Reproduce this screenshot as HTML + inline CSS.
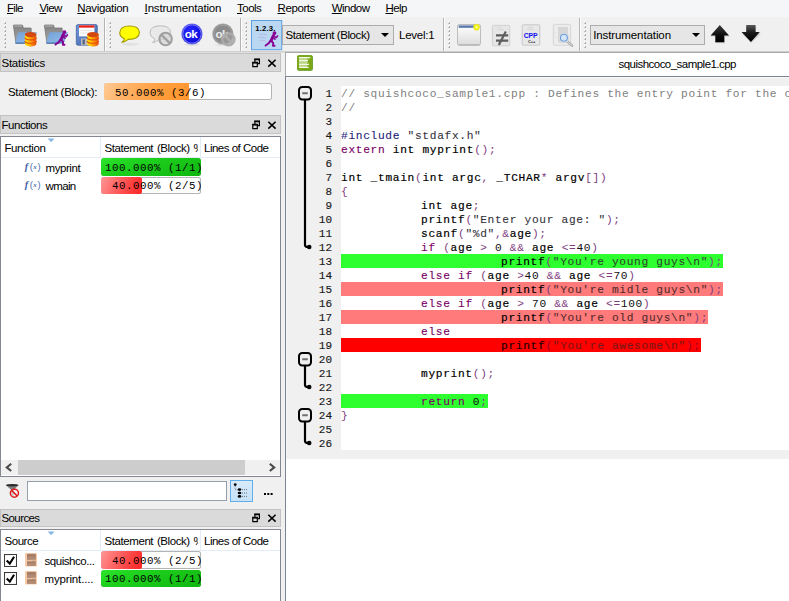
<!DOCTYPE html>
<html><head><meta charset="utf-8"><title>CoverageBrowser</title>
<style>
html,body{margin:0;padding:0}
body{width:789px;height:601px;overflow:hidden;background:#f0f0f0;position:relative;font-family:"Liberation Sans",sans-serif;font-size:11.5px;color:#000;letter-spacing:-0.25px}
div,span,svg{position:absolute;box-sizing:border-box}
span{position:static}
.abs{position:absolute}
/* menubar */
#menubar{left:0;top:0;width:789px;height:17px;background:#f5f6f7}
#menubar span{position:absolute;top:1px;line-height:14px;white-space:nowrap}
u{text-decoration:underline;text-underline-offset:1px}
/* toolbar */
#toolbar{left:0;top:17px;width:789px;height:34px;background:#f0f0f0}
#tbline{left:0;top:51px;width:789px;height:1px;background:#cdcdcd}#tbline3{left:0;top:52px;width:285px;height:1px;background:#e0e0e0}
#tbline2{left:285px;top:52px;width:504px;height:1px;background:#a9a9a9}
.sep{top:18px;width:1px;height:33px;background:#b4b4b4}
.sep:after{content:"";position:absolute;left:1px;top:0;width:1px;height:33px;background:#fff}
.grip{top:22px;width:3px;height:27px}
.combo{background:#e6e6e6;border:1px solid #adadad;height:20px;line-height:19px;white-space:nowrap}
.arrow{width:0;height:0;border-left:4px solid transparent;border-right:4px solid transparent;border-top:4px solid #000}
/* dock headers */
.dock{left:0;width:281px;height:18.4px;background:#dadada;border:1px solid #c3c3c3;line-height:18px;padding-left:0.5px;white-space:nowrap}
.tree{left:0;width:281px;background:#fff;border:1px solid #828790}
.th{top:0;height:21px;line-height:23px;border-bottom:1px solid #e4ecf7;white-space:nowrap}
.thsep{top:0;width:1px;height:21px;background:#e4ecf7}
.bar{height:17px;border-radius:2.5px;overflow:hidden;background:#fff;box-shadow:inset 0 0 0 1px #b4b4b4}
.bar i{position:absolute;left:0;top:0;bottom:0;border-radius:2.5px}
.bar b{position:absolute;left:4px;top:2px;font:normal 10.8px/15.6px "Liberation Mono",monospace;letter-spacing:0.52px;white-space:pre;color:#000}
.green i{width:100%;background:linear-gradient(160deg,#2ee62e 0,#20d420 25%,#18c618 60%,#0fb60f 100%)}
.red i{width:40.9px;background:linear-gradient(115deg,#ff9898 0,#ff7070 30%,#ff4040 70%,#ff2626 100%)}
.row{white-space:nowrap;line-height:18px;height:18px}
/* editor */
#edpanel{left:286px;top:53px;width:503px;height:548px;background:#fff}
#edborder{left:285px;top:76px;width:1px;height:525px;background:#7c8492}#edborder2{left:285px;top:53px;width:1px;height:23px;background:#adadad}
#tabline{left:286px;top:76px;width:503px;height:1px;background:#7c8492}
#edgray{left:286px;top:77px;width:503px;height:382px;background:#f0f0f0;border-left:1px solid #f7f7f7;border-top:1px solid #f9f9f9}
#edwhite{left:340.5px;top:86px;width:449px;height:364px;background:#fff}
.ln{left:300px;width:32px;height:14px;text-align:right;font:normal 11px/14px "Liberation Mono",monospace;-webkit-text-stroke:0.15px #1a1a22;letter-spacing:0;color:#1a1a22;padding-top:1.3px;overflow:visible}
.cl{left:341px;height:14px;padding-top:0;width:449px;overflow:hidden;white-space:pre;tab-size:80px;-moz-tab-size:80px;font:11.2px/17px "Liberation Mono",monospace;letter-spacing:0.68px;color:#000}
.cl span{position:static}
.hl{display:inline-block;height:14px;line-height:17px;overflow:hidden;margin-left:0;vertical-align:top}
.hg{background:#2eff2e}.hs{background:#ff7a7a}.hr{background:#ff0000}
.c{color:#808080}.p{color:#241c78;-webkit-text-stroke:.1px #241c78}.s{color:#34343c;-webkit-text-stroke:.1px #34343c}.k{color:#7a0066;-webkit-text-stroke:.12px #7a0066}.i{color:#000;-webkit-text-stroke:0.18px #000}.o{color:#803c80}.n{color:#101010}
.hr .s{color:#8c1010}.hr .o{color:#a00030}.hr .i{color:#300000}
.hs .s{color:#5a2a2a}.hg .s{color:#2a4a2a}
</style></head><body>
<div id="menubar">
<span style="left:7px;letter-spacing:-0.7px"><u>F</u>ile</span>
<span style="left:39.5px;letter-spacing:-0.65px"><u>V</u>iew</span>
<span style="left:77.3px;letter-spacing:-0.33px"><u>N</u>avigation</span>
<span style="left:144.6px;letter-spacing:-0.17px"><u>I</u>nstrumentation</span>
<span style="left:237px;letter-spacing:-0.5px"><u>T</u>ools</span>
<span style="left:277.5px;letter-spacing:-0.4px"><u>R</u>eports</span>
<span style="left:331.8px;letter-spacing:-0.55px"><u>W</u>indow</span>
<span style="left:385.5px;letter-spacing:-0.6px"><u>H</u>elp</span>
</div>

<div id="toolbar"></div><div id="tbline"></div><div id="tbline2"></div><div id="tbline3"></div>
<div class="sep" style="left:104px"></div><div class="sep" style="left:240px"></div><div class="sep" style="left:443px"></div><div class="sep" style="left:579px"></div>
<svg id="tbsvg" style="left:0;top:17px" width="789" height="35" viewBox="0 17 789 35">
<defs>
<linearGradient id="gFold" x1="0" y1="0" x2="0" y2="1"><stop offset="0" stop-color="#808080"/><stop offset="1" stop-color="#ababab"/></linearGradient>
<linearGradient id="gFront" x1="0" y1="0" x2="1" y2="1"><stop offset="0" stop-color="#6fa0da"/><stop offset=".6" stop-color="#8ab2e2"/><stop offset="1" stop-color="#5a90d4"/></linearGradient>
<linearGradient id="gDb" x1="0" y1="0" x2="1" y2="0"><stop offset="0" stop-color="#ffe400"/><stop offset=".3" stop-color="#ffc400"/><stop offset=".7" stop-color="#fb7c08"/><stop offset="1" stop-color="#e2500e"/></linearGradient>
<linearGradient id="gFlop" x1="0" y1="0" x2="1" y2="1"><stop offset="0" stop-color="#6f96d8"/><stop offset="1" stop-color="#3f62a8"/></linearGradient>
<linearGradient id="gWin" x1="0" y1="0" x2="0" y2="1"><stop offset="0" stop-color="#ffffff"/><stop offset="1" stop-color="#dcdcdc"/></linearGradient>
<radialGradient id="gOk" cx=".4" cy=".35" r=".7"><stop offset="0" stop-color="#2a2aff"/><stop offset="1" stop-color="#0808d8"/></radialGradient>
<radialGradient id="gYel" cx=".5" cy=".5" r=".5"><stop offset="0" stop-color="#ffffd8"/><stop offset=".45" stop-color="#f8f820"/><stop offset="1" stop-color="#eaea00"/></radialGradient>
<linearGradient id="gArU" x1="0" y1="0" x2="0" y2="1"><stop offset="0" stop-color="#3c3c3c"/><stop offset=".6" stop-color="#0c0c0c"/><stop offset="1" stop-color="#000"/></linearGradient><linearGradient id="gArD" x1="0" y1="0" x2="0" y2="1"><stop offset="0" stop-color="#585858"/><stop offset=".45" stop-color="#1a1a1a"/><stop offset="1" stop-color="#000"/></linearGradient>
<g id="grip"><g fill="#fff"><rect x="0" y="-0.6" width="1.6" height="1.6"/><rect x="0" y="3.4" width="1.6" height="1.6"/><rect x="0" y="7.4" width="1.6" height="1.6"/><rect x="0" y="11.4" width="1.6" height="1.6"/><rect x="0" y="15.4" width="1.6" height="1.6"/><rect x="0" y="19.4" width="1.6" height="1.6"/><rect x="0" y="23.4" width="1.6" height="1.6"/></g><g fill="#969696"><path d="M2 -0.2 v2 h-2 z M.9 0.6 h1.1 v1.2 h-1.1z"/><path d="M2 3.8 v2 h-2 z M.9 4.6 h1.1 v1.2 h-1.1z"/><path d="M2 7.8 v2 h-2 z M.9 8.6 h1.1 v1.2 h-1.1z"/><path d="M2 11.8 v2 h-2 z M.9 12.6 h1.1 v1.2 h-1.1z"/><path d="M2 15.8 v2 h-2 z M.9 16.6 h1.1 v1.2 h-1.1z"/><path d="M2 19.8 v2 h-2 z M.9 20.6 h1.1 v1.2 h-1.1z"/><path d="M2 23.8 v2 h-2 z M.9 24.6 h1.1 v1.2 h-1.1z"/></g></g>
<g id="folder"><path d="M.4 1.6 Q.4 1 1 1 h8 Q9.6 1 9.8 1.8 L10.2 4 h7.4 Q18.2 4 18.2 4.6 V9 L15 19.4 h-12 z" fill="url(#gFold)" stroke="#707070" stroke-width=".7"/><path d="M1.2 2 h7.8" stroke="#c8c8c8" stroke-width=".8"/><path d="M5.4 8.2 h18.6 l-4.2 10.8 h-17.6 z" fill="url(#gFront)"/><path d="M2.2 19 h17.6" stroke="#3a72bc" stroke-width="1"/></g>
<g id="db"><path d="M0 2.6 v9.4 a5.7 2.6 0 0 0 11.4 0 v-9.4 z" fill="url(#gDb)"/><path d="M0 5.6 a5.7 2.3 0 0 0 11.4 0 M0 8.9 a5.7 2.3 0 0 0 11.4 0" fill="none" stroke="#e2500a" stroke-width="1.1"/><ellipse cx="5.7" cy="2.6" rx="5.7" ry="2.6" fill="#d24810"/></g>
<g id="runner" fill="none" stroke="#860094" stroke-linecap="round" stroke-linejoin="round"><circle cx="9.9" cy="2.1" r="1.9" fill="#860094" stroke="none"/><path d="M8.8 4.6 L6.4 9.8" stroke-width="2.9"/><path d="M8.8 5 L11.8 6.6 L13 4.8" stroke-width="1.5"/><path d="M8 6.2 L10.4 8.2" stroke-width="1.5"/><path d="M6.6 9.8 L8.6 11.8 L8.4 14.7 L10 14.7" stroke-width="1.9"/><path d="M6 9.6 L3.8 12.6 L1 14.6" stroke-width="1.9"/></g>
<g id="nosign"><circle cx="0" cy="0" r="6.2" fill="#d4d4d4" fill-opacity=".7" stroke="#a0a0a0" stroke-width="2.1"/><path d="M-4.4 -4.4 L4.4 4.4" stroke="#a0a0a0" stroke-width="2.2"/></g>
</defs>
<use href="#grip" x="4" y="22"/><use href="#grip" x="109" y="22"/><use href="#grip" x="245" y="22"/><use href="#grip" x="448" y="22"/><use href="#grip" x="584" y="22"/>
<!-- icon1 -->
<use href="#folder" x="13" y="24"/><use href="#db" x="24.9" y="32"/>
<!-- icon2 -->
<use href="#folder" x="44" y="24"/><use href="#runner" x="54.5" y="30"/>
<!-- icon3 floppy -->
<rect x="76.3" y="24.6" width="21" height="20.6" rx="1.6" fill="url(#gFlop)" stroke="#3a5a9c" stroke-width=".7"/>
<rect x="79" y="25.4" width="15.4" height="11" fill="#fbfbfb"/><rect x="79" y="25.4" width="15.4" height="2.2" fill="#e81c10"/>
<path d="M80.5 30.5h12M80.5 33h12" stroke="#ddd" stroke-width=".7"/>
<rect x="81" y="38.4" width="9" height="6.8" fill="#b8bcc4"/><rect x="82.6" y="39.4" width="2.2" height="5" fill="#55607a"/>
<use href="#db" x="87.2" y="32"/>
<!-- yellow bubble -->
<ellipse cx="130.4" cy="44.2" rx="8.6" ry="1.5" fill="#e1e1e1"/>
<path d="M124.4 38.8 Q119.6 36.6 119.8 32.5 Q120.2 26 129.6 26 Q139.2 26 139.4 32.5 Q139.2 39.4 128.2 39.4 Q125 42 122.2 42.3 Q124 40.6 124.4 38.8z" fill="#ffff00" stroke="#a09800" stroke-width="1.1"/>
<!-- gray bubble + nosign -->
<path d="M155 39.2 Q149.8 36.8 150 32.6 Q150.4 25.8 160.4 25.8 Q170.4 25.8 170.6 32.6 Q170.4 39.8 158.8 39.8 Q155.4 42.4 152.6 42.6 Q154.6 41 155 39.2z" fill="#e9e9e9" stroke="#b4b4b4" stroke-width=".9"/>
<use href="#nosign" x="165.6" y="39"/>
<!-- blue ok -->
<ellipse cx="192" cy="44.6" rx="8" ry="1.4" fill="#e0e0e0"/>
<circle cx="192" cy="34" r="10.6" fill="#7474f4"/><circle cx="192" cy="34" r="10" fill="url(#gOk)"/><circle cx="192" cy="34" r="9.2" fill="none" stroke="#fff" stroke-opacity=".75" stroke-width=".6"/>
<text x="190.9" y="37.8" text-anchor="middle" font-family="Liberation Sans, sans-serif" font-weight="bold" font-size="11.6" fill="#fff" letter-spacing="-.55">ok</text>
<!-- gray ok -->
<ellipse cx="223" cy="44.8" rx="8" ry="1.3" fill="#e2e2e2"/>
<circle cx="222.9" cy="34" r="10.6" fill="#a8a8a8"/><circle cx="222.9" cy="34" r="9.8" fill="#8b8b8b"/><circle cx="222.9" cy="34" r="9" fill="none" stroke="#c4c4c4" stroke-opacity=".6" stroke-width=".6"/>
<text x="221.6" y="37.8" text-anchor="middle" font-family="Liberation Sans, sans-serif" font-weight="bold" font-size="11.6" fill="#ececec" letter-spacing="-.55">ok</text>
<circle cx="228.4" cy="39.4" r="6.2" fill="#9c9c9c" fill-opacity=".72" stroke="#adadad" stroke-width="2"/><path d="M224 35 L232.8 43.8" stroke="#adadad" stroke-width="2.2"/>
<!-- 1.2.3 button -->
<rect x="251.5" y="20.5" width="30.2" height="29.2" fill="#bbd8f3" stroke="#5a9fe2" stroke-width="1"/>
<text x="255.3" y="30.7" font-family="Liberation Sans, sans-serif" font-weight="bold" font-size="7.7" fill="#000" letter-spacing=".15">1.2.3.</text>
<path d="M259 34.5q4 -1 8 .6M258 37.5q4 -1 8 .6M259.5 40.5q3 -1 6 .6" stroke="#b4a8e0" stroke-width=".7" fill="none"/>
<use href="#runner" x="264.6" y="31"/>
<!-- window icon -->
<rect x="457.5" y="24.5" width="23" height="20.5" rx="1.6" fill="url(#gWin)" stroke="#bcbcbc" stroke-width="1"/><path d="M458.5 45h21" stroke="#a8a8a8" stroke-width="1"/>
<rect x="458.6" y="25.4" width="19" height="2.4" fill="#5878ac"/>
<circle cx="476.6" cy="27.2" r="3.1" fill="url(#gYel)" stroke="#e8e05a" stroke-width=".6"/>
<!-- not-equal icon -->
<rect x="492.4" y="25.4" width="17.4" height="20.4" rx="1" fill="#e6e6e6" stroke="#cdcdcd" stroke-width=".9"/>
<path d="M497 27.6h5M497 29.6h7" stroke="#d6d6d6" stroke-width=".9"/>
<path d="M496 35.3h12.2M496 40.7h12.2" stroke="#5e5e5e" stroke-width="2.3"/><path d="M505.8 31.4L498.8 45" stroke="#5e5e5e" stroke-width="2.2"/>
<!-- cpp icon -->
<rect x="522.2" y="24.8" width="17.6" height="20.4" rx="1" fill="#e8e8e8" stroke="#c4c4c4" stroke-width=".9"/>
<path d="M528 27.4h5M527 29.4h7" stroke="#d4d4d4" stroke-width=".9"/>
<text x="530.6" y="37.7" text-anchor="middle" font-family="Liberation Sans, sans-serif" font-weight="bold" font-size="6.9" fill="#1010f0" letter-spacing="-.1">CPP</text>
<text x="531.6" y="42.6" text-anchor="middle" font-family="Liberation Sans, sans-serif" font-weight="bold" font-size="4.2" fill="#333">C++</text>
<!-- magnifier icon -->
<rect x="553.3" y="24.4" width="17.4" height="20.8" rx="1.2" fill="#ececec" stroke="#d3d3d3" stroke-width=".9"/>
<rect x="558" y="27" width="10" height="15.6" fill="#d6d6d6"/>
<path d="M554.6 33h1M554.6 37.6h1" stroke="#d0d0d0" stroke-width=".8"/>
<path d="M566.6 40.6L572 45.6" stroke="#a9a9ad" stroke-width="2.6" stroke-linecap="round"/><path d="M567 41L571.8 45.4" stroke="#ececec" stroke-width=".8" stroke-linecap="round"/>
<circle cx="563.9" cy="37.8" r="4.9" fill="#f2f4f6" stroke="#c9cdd2" stroke-width=".7"/>
<circle cx="563.9" cy="37.8" r="3.5" fill="#d3e4f7" stroke="#6b9bd6" stroke-width="1.1"/>
<!-- up/down arrows -->
<path d="M720.2 26.6L730 36.6h-5v6.6h-9.4v-6.6h-5.4z" fill="#c4c4c4" opacity=".7"/>
<path d="M719.8 25.1L729 35.6h-4.7v6.7h-9v-6.7h-4.7z" fill="url(#gArU)"/>
<path d="M751.4 43L761 33.4h-5V27h-9.4v6.4h-5z" fill="#c4c4c4" opacity=".7"/>
<path d="M750.9 41.9L759.8 32.1h-4.2v-7h-9.4v7h-4.6z" fill="url(#gArD)"/>
</svg>
<div class="combo" style="left:282px;top:25px;width:112px;padding-left:2.4px;letter-spacing:-0.42px">Statement (Block)</div><div class="arrow" style="left:381px;top:33px"></div>
<div style="left:399px;top:27px;line-height:17px;white-space:nowrap">Level:1</div>
<div class="combo" style="left:590px;top:25px;width:115px;padding-left:2.2px;letter-spacing:-0.1px">Instrumentation</div><div class="arrow" style="left:691.5px;top:33px"></div>

<!-- dock title icons -->
<svg width="0" height="0" style="left:0;top:0"><defs>
<g id="dockbtn"><path d="M2.9 1.4h4.5v4.3h-4.5z" fill="none" stroke="#000" stroke-width="1.2"/><path d="M2.3 1.4h5.7" stroke="#000" stroke-width="1.7"/><path d="M.8 4.6h4.5v4.1h-4.5z" fill="#dadada" stroke="#000" stroke-width="1.2"/><path d="M.2 4.6h5.7" stroke="#000" stroke-width="1.7"/>
<path d="M16.3 1.7l7.3 6.9M23.6 1.7l-7.3 6.9" stroke="#000" stroke-width="1.55"/></g>
<g id="fx"><text x=".8" y="8.6" font-family="Liberation Serif, serif" font-style="italic" font-weight="bold" font-size="10.4" fill="#3f62a6">f</text><text x="5.8" y="8.7" font-family="Liberation Sans, sans-serif" font-size="9.4" fill="#4a6cae">(</text><text x="9.2" y="7.6" font-family="Liberation Serif, serif" font-style="italic" font-weight="bold" font-size="6.8" fill="#4a6cae">x</text><text x="13.6" y="8.7" font-family="Liberation Sans, sans-serif" font-size="9.4" fill="#4a6cae">)</text></g>
<g id="chk"><rect x=".5" y=".5" width="12" height="12" fill="#fff" stroke="#3c3c3c" stroke-width="1.1"/><path d="M2.7 6.5L5.8 9.5L10.1 2.8" fill="none" stroke="#000" stroke-width="2.1"/></g>
<g id="cab"><rect x="0" y="0" width="12" height="13.6" rx=".8" fill="#f8cca8"/><rect x="2" y=".9" width="8.8" height="5.6" fill="#a67e68"/><rect x="2" y="3.6" width="8.8" height="2.9" fill="#b08a74"/><rect x="2" y="8.3" width="8.8" height="4.5" fill="#a88069"/><rect x="2" y="10.6" width="8.8" height="2.2" fill="#b48e78"/><rect x="2" y="6.5" width="4" height=".7" fill="#b08a74"/><rect x="6.6" y="7.7" width="4.2" height=".7" fill="#a88069"/></g>
</defs></svg>

<div class="dock" style="top:53px;height:19px">Statistics</div>
<svg style="left:252px;top:57.5px" width="26" height="10"><use href="#dockbtn"/></svg>
<div style="left:8px;top:84px;line-height:17px;white-space:nowrap;letter-spacing:-0.3px">Statement (Block):</div>
<div class="bar" style="left:104px;top:83.4px;width:168px;height:17px"><i style="width:84.5px;border-radius:2.5px 0 0 2.5px;background:linear-gradient(115deg,#ffcb96 0,#ffb062 30%,#ff9c3a 70%,#ff962e 100%)"></i><b style="top:2.6px"> 50.000% (3/6)</b></div>

<div class="dock" style="top:115.4px;letter-spacing:-0.45px">Functions</div>
<svg style="left:252px;top:119.5px" width="26" height="10"><use href="#dockbtn"/></svg>
<div class="tree" style="top:136px;height:341px">
 <div class="th" style="left:0;width:279px"></div>
 <div class="th" style="left:3.5px;border:0;letter-spacing:-0.4px">Function</div>
 <div class="th" style="left:103.5px;border:0;width:93.6px;overflow:hidden;letter-spacing:-0.42px;word-spacing:1px">Statement (Block) %</div>
 <div class="th" style="left:203px;border:0;letter-spacing:-0.5px">Lines of Code</div>
 <div class="thsep" style="left:99px"></div><div class="thsep" style="left:198.5px"></div>
 <svg style="left:46.3px;top:1px" width="9" height="5"><path d="M.6 .4h7L4.1 4.2z" fill="#86b8e6"/></svg>
 <svg style="left:23px;top:23.7px" width="18" height="12"><use href="#fx"/></svg>
 <div class="row" style="left:44.5px;top:21.5px;letter-spacing:-0.42px">myprint</div>
 <div class="bar green" style="left:100px;top:21px;width:99.5px;height:17.5px"><i></i><b style="top:2.6px">100.000% (1/1)</b></div>
 <svg style="left:23px;top:41.7px" width="18" height="12"><use href="#fx"/></svg>
 <div class="row" style="left:44.5px;top:39.5px;letter-spacing:-0.62px">wmain</div>
 <div class="bar red" style="left:100px;top:39.8px;width:99.5px"><i></i><b> 40.000% (2/5)</b></div>
 <!-- scrollbar -->
 <div style="left:0;top:323px;width:279px;height:15px;background:#f0f0f0"></div>
 <div style="left:17px;top:323px;width:227px;height:15px;background:#cdcdcd"></div>
 <svg style="left:4.4px;top:325.6px" width="8" height="9"><path d="M6.2 .8L1.8 4.4L6.2 8" fill="none" stroke="#4a4a4a" stroke-width="2.1"/></svg>
 <svg style="left:267.4px;top:325.6px" width="8" height="9"><path d="M1.8 .8L6.2 4.4L1.8 8" fill="none" stroke="#4a4a4a" stroke-width="2.1"/></svg>
</div>

<!-- filter row -->
<svg style="left:5px;top:483px" width="16" height="16"><path d="M1 2.2h12.4L8.6 7.2v6.2l-2-1V7.2z" fill="#7c7c7c"/><path d="M6.6 7.2h2v6.2l-2-1z" fill="#4c4c4c"/><ellipse cx="7.2" cy="2.2" rx="6.3" ry="1.3" fill="#2c2c2c"/><circle cx="9.4" cy="10.2" r="4" fill="#fff" fill-opacity=".72" stroke="#de1c1c" stroke-width="1.5"/><path d="M6.7 7.5l5.4 5.4" stroke="#de1c1c" stroke-width="1.6"/></svg>
<div style="left:27px;top:481px;width:200px;height:20px;background:#fff;border:1px solid #969dab"></div>
<div style="left:230px;top:480px;width:23px;height:22px;background:linear-gradient(#d8ebfb,#c6e1f8);border:1px solid #62aee9"></div>
<svg style="left:233px;top:482px" width="18" height="18"><circle cx="2.2" cy="2.6" r="1.4" fill="#000"/><path d="M2.2 4v3.8h3" stroke="#666" stroke-width=".7" fill="none" stroke-dasharray="1 .8"/><ellipse cx="6.5" cy="7.6" rx="1.8" ry="1.3" fill="#000"/><ellipse cx="6.5" cy="11" rx="1.8" ry="1.3" fill="#000"/><ellipse cx="6.5" cy="14.4" rx="1.8" ry="1.3" fill="#000"/><path d="M9 7.6h6M9 11h6M9 14.4h6" stroke="#555" stroke-width=".9" stroke-dasharray=".9 1.1"/></svg>
<div style="left:264px;top:493px;width:2.2px;height:2.2px;background:#000;box-shadow:3.3px 0 0 #000,6.6px 0 0 #000"></div>

<div class="dock" style="top:508.5px;letter-spacing:-0.6px;line-height:16px">Sources</div>
<svg style="left:252px;top:512.7px" width="26" height="10"><use href="#dockbtn"/></svg>
<div class="tree" style="top:529px;height:80px">
 <div class="th" style="left:0;width:279px"></div>
 <div class="th" style="left:3.5px;border:0;letter-spacing:-0.45px">Source</div>
 <div class="th" style="left:103.5px;border:0;width:93.6px;overflow:hidden;letter-spacing:-0.42px;word-spacing:1px">Statement (Block) %</div>
 <div class="th" style="left:203px;border:0;letter-spacing:-0.5px">Lines of Code</div>
 <div class="thsep" style="left:99px"></div><div class="thsep" style="left:198.5px"></div>
 <svg style="left:46.3px;top:1px" width="9" height="5"><path d="M.6 .4h7L4.1 4.2z" fill="#86b8e6"/></svg>
 <svg style="left:3px;top:24px" width="13" height="13"><use href="#chk"/></svg>
 <svg style="left:24px;top:23.2px" width="13" height="15"><use href="#cab"/></svg>
 <div class="row" style="left:43.5px;top:21.5px;letter-spacing:-0.45px">squishco...</div>
 <div class="bar red" style="left:100px;top:21px;width:99.5px;height:17.5px"><i></i><b style="top:2.8px"> 40.000% (2/5)</b></div>
 <svg style="left:3px;top:42px" width="13" height="13"><use href="#chk"/></svg>
 <svg style="left:24px;top:41.2px" width="13" height="15"><use href="#cab"/></svg>
 <div class="row" style="left:43.5px;top:39.7px;letter-spacing:-0.15px">myprint....</div>
 <div class="bar green" style="left:100px;top:40px;width:99.5px"><i></i><b>100.000% (1/1)</b></div>
</div>

<div id="edpanel"></div><div id="edborder"></div><div id="edborder2"></div><div id="tabline"></div><div id="edgray"></div><div id="edwhite"></div>
<svg style="left:297px;top:55px" width="16" height="16"><rect x=".2" y=".2" width="15.6" height="15.6" rx="1.8" fill="#4a8c12"/><rect x=".2" y=".2" width="15" height="15" rx="1.6" fill="#7ca818"/><rect x="2" y="2" width="8" height="11" fill="#b9d582"/><path d="M2 2.7h11.2M2 5.6h9M2 9.4h10M2 12.4h9.6" stroke="#f4f9e6" stroke-width="1.3"/><path d="M10 4.2h1.6M10 7.6h1.2M10 11h.8" stroke="#a8c968" stroke-width="1.4"/></svg>
<div style="left:618.5px;top:57px;line-height:14px;white-space:nowrap;letter-spacing:-0.53px">squishcoco_sample1.cpp</div>
<svg style="left:286px;top:80px" width="54" height="376" viewBox="286 80 54 376">
<g fill="none" stroke="#000" stroke-width="2.2">
<path d="M305 99.5V245Q305 247 308 247"/>
<path d="M305 365.5V385Q305 387 308 387"/>
<path d="M305 421.5V441Q305 443 308 443"/>
</g>
<g fill="#000"><circle cx="309.2" cy="247" r="2.3"/><circle cx="309.2" cy="387" r="2.3"/><circle cx="309.2" cy="443" r="2.3"/></g>
<g fill="#f0f0f0" stroke="#000" stroke-width="2"><rect x="299" y="87" width="12" height="12.4" rx="3.2"/><rect x="299" y="353" width="12" height="12.4" rx="3.2"/><rect x="299" y="409" width="12" height="12.4" rx="3.2"/></g>
<g stroke="#727272" stroke-width="2"><path d="M302.2 93.2h5.6M302.2 359.2h5.6M302.2 415.2h5.6"/></g>
</svg>
<div class="ln" style="top:86px">1</div>
<div class="ln" style="top:100px">2</div>
<div class="ln" style="top:114px">3</div>
<div class="ln" style="top:128px">4</div>
<div class="ln" style="top:142px">5</div>
<div class="ln" style="top:156px">6</div>
<div class="ln" style="top:170px">7</div>
<div class="ln" style="top:184px">8</div>
<div class="ln" style="top:198px">9</div>
<div class="ln" style="top:212px">10</div>
<div class="ln" style="top:226px">11</div>
<div class="ln" style="top:240px">12</div>
<div class="ln" style="top:254px">13</div>
<div class="ln" style="top:268px">14</div>
<div class="ln" style="top:282px">15</div>
<div class="ln" style="top:296px">16</div>
<div class="ln" style="top:310px">17</div>
<div class="ln" style="top:324px">18</div>
<div class="ln" style="top:338px">19</div>
<div class="ln" style="top:352px">20</div>
<div class="ln" style="top:366px">21</div>
<div class="ln" style="top:380px">22</div>
<div class="ln" style="top:394px">23</div>
<div class="ln" style="top:408px">24</div>
<div class="ln" style="top:422px">25</div>
<div class="ln" style="top:436px">26</div>
<div class="cl" style="top:86px"><span class="c">// squishcoco_sample1.cpp : Defines the entry point for the console application.</span></div>
<div class="cl" style="top:100px"><span class="c">//</span></div>
<div class="cl" style="top:128px"><span class="p">#include</span> <span class="s">"stdafx.h"</span></div>
<div class="cl" style="top:142px"><span class="k">extern</span> <span class="i">int</span> <span class="i">myprint</span><span class="o">();</span></div>
<div class="cl" style="top:170px"><span class="i">int</span> <span class="i">_tmain</span><span class="o">(</span><span class="i">int</span> <span class="i">argc</span><span class="o">,</span> <span class="i">_TCHAR</span><span class="o">*</span> <span class="i">argv</span><span class="o">[])</span></div>
<div class="cl" style="top:184px"><span class="o">{</span></div>
<div class="cl" style="top:198px">	<span class="i">int</span> <span class="i">age</span><span class="o">;</span></div>
<div class="cl" style="top:212px">	<span class="i">printf</span><span class="o">(</span><span class="s">"Enter your age: "</span><span class="o">);</span></div>
<div class="cl" style="top:226px">	<span class="i">scanf</span><span class="o">(</span><span class="s">"%d"</span><span class="o">,&amp;</span><span class="i">age</span><span class="o">);</span></div>
<div class="cl" style="top:240px">	<span class="k">if</span> <span class="o">(</span><span class="i">age</span> <span class="o">&gt;</span> <span class="n">0</span> <span class="o">&amp;&amp;</span> <span class="i">age</span> <span class="o">&lt;=</span><span class="n">40</span><span class="o">)</span></div>
<div class="cl" style="top:254px"><span class="hl hg">		<span class="i">printf</span><span class="o">(</span><span class="s">"You're young guys\n"</span><span class="o">);</span></span></div>
<div class="cl" style="top:268px">	<span class="k">else</span> <span class="k">if</span> <span class="o">(</span><span class="i">age</span> <span class="o">&gt;</span><span class="n">40</span> <span class="o">&amp;&amp;</span> <span class="i">age</span> <span class="o">&lt;=</span><span class="n">70</span><span class="o">)</span></div>
<div class="cl" style="top:282px"><span class="hl hs">		<span class="i">printf</span><span class="o">(</span><span class="s">"You're midle guys\n"</span><span class="o">);</span></span></div>
<div class="cl" style="top:296px">	<span class="k">else</span> <span class="k">if</span> <span class="o">(</span><span class="i">age</span> <span class="o">&gt;</span> <span class="n">70</span> <span class="o">&amp;&amp;</span> <span class="i">age</span> <span class="o">&lt;=</span><span class="n">100</span><span class="o">)</span></div>
<div class="cl" style="top:310px"><span class="hl hs">		<span class="i">printf</span><span class="o">(</span><span class="s">"You're old guys\n"</span><span class="o">);</span></span></div>
<div class="cl" style="top:324px">	<span class="k">else</span></div>
<div class="cl" style="top:338px"><span class="hl hr">		<span class="i">printf</span><span class="o">(</span><span class="s">"You're awesome\n"</span><span class="o">);</span></span></div>
<div class="cl" style="top:366px">	<span class="i">myprint</span><span class="o">();</span></div>
<div class="cl" style="top:394px"><span class="hl hg">	<span class="k">return</span> <span class="n">0</span><span class="o">;</span></span></div>
<div class="cl" style="top:408px"><span class="o">}</span></div>

</body></html>
